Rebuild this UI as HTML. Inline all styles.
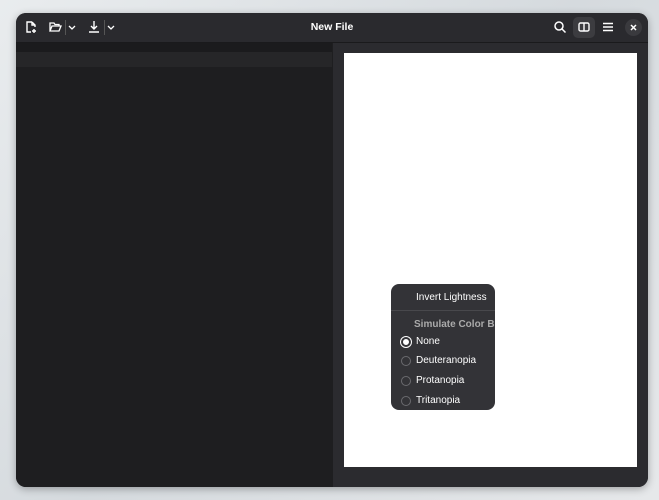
<!DOCTYPE html><html><head><style>
body{margin:0;width:659px;height:500px;background:linear-gradient(135deg,#e9ecee,#d5dade 50%,#e6e8ea);overflow:hidden;font-family:"Liberation Sans",sans-serif;position:relative}
.win{position:absolute;left:16px;top:13px;width:632px;height:474px;background:#1e1e20;border-radius:10px;overflow:hidden;box-shadow:0 2px 8px rgba(0,0,0,.3)}
.hdr{position:absolute;left:0;top:0;width:632px;height:29px;background:#2a2a2e;border-bottom:1px solid #1a1a1c}
.title{position:absolute;left:0;right:0;top:8px;text-align:center;color:#fff;font-weight:bold;font-size:10.5px}
.ic{position:absolute;top:7px}
.left{position:absolute;left:0;top:30px;width:316px;height:444px;background:#1e1e20}
.strip{position:absolute;left:0;top:0;width:316px;height:9px;background:#1b1b1d}
.cur{position:absolute;left:0;top:9px;width:316px;height:15px;background:#262628}
.right{position:absolute;left:317px;top:30px;width:315px;height:444px;background:#2b2b2f}
.page{position:absolute;left:11px;top:10px;width:293px;height:414px;background:#fff}
.menu{position:absolute;left:391px;top:284px;width:104px;height:126px;background:#333337;border-radius:8px;color:#fff;font-size:10px;overflow:hidden}
.menu div{position:absolute;left:25px;white-space:nowrap}
.r{position:absolute;left:10px;width:10px;height:10px;border:1px solid #6a6a6e;border-radius:50%;box-sizing:border-box}
</style></head><body>
<div class="win">
<div class="hdr">
<svg class="ic" style="left:8px" width="14" height="14" viewBox="0 0 14 14" fill="none" stroke="#fff" stroke-width="1.4"><path d="M8 2H3v10h4M8 2l3 3v2M8 2v3h3M10 9v4M8 11h4"/></svg>
<svg class="ic" style="left:32px" width="14" height="14" viewBox="0 0 14 14" fill="none" stroke="#fff" stroke-width="1.3"><path d="M2 11V3h4l1 1.5h4V6M2 11l2-5h9l-2 5z"/></svg>
<div style="position:absolute;left:49px;top:7px;width:1px;height:15px;background:#555"></div>
<svg class="ic" style="left:51px" width="10" height="14" viewBox="0 0 10 14" fill="none" stroke="#fff" stroke-width="1.3"><path d="M2 6l3 3 3-3"/></svg>
<svg class="ic" style="left:71px" width="14" height="14" viewBox="0 0 14 14" fill="none" stroke="#fff" stroke-width="1.4"><path d="M7 1v8M4 6l3 3 3-3M2 12h10"/></svg>
<div style="position:absolute;left:88px;top:7px;width:1px;height:15px;background:#555"></div>
<svg class="ic" style="left:90px" width="10" height="14" viewBox="0 0 10 14" fill="none" stroke="#fff" stroke-width="1.3"><path d="M2 6l3 3 3-3"/></svg>
<div class="title">New File</div>
<svg class="ic" style="left:537px" width="14" height="14" viewBox="0 0 14 14" fill="none" stroke="#fff" stroke-width="1.5"><circle cx="6" cy="6" r="4"/><path d="M9 9l3.5 3.5"/></svg>
<div style="position:absolute;left:557px;top:4px;width:22px;height:21px;background:#3c3c40;border-radius:5px"></div>
<svg class="ic" style="left:561px" width="14" height="14" viewBox="0 0 14 14" fill="none" stroke="#fff" stroke-width="1.4"><rect x="2" y="3" width="10" height="8" rx="1.5"/><path d="M7 3v8" /></svg>
<svg class="ic" style="left:585px" width="14" height="14" viewBox="0 0 14 14" fill="none" stroke="#fff" stroke-width="1.4"><path d="M2 3.5h10M2 7h10M2 10.5h10"/></svg>
<div style="position:absolute;left:609px;top:6px;width:17px;height:17px;background:#3a3a3e;border-radius:50%"></div>
<svg class="ic" style="left:612px;top:9px" width="11" height="11" viewBox="0 0 11 11" stroke="#fff" stroke-width="1.5"><path d="M3 3l5 5M8 3l-5 5"/></svg>
</div>
<div class="left"><div class="strip"></div><div class="cur"></div></div>
<div class="right"><div class="page"></div></div>
</div>
<div class="menu">
<div style="top:8px">Invert Lightness</div>
<div style="left:0;top:26px;width:104px;height:1px;background:#48484c"></div>
<div style="top:35px;color:#aaa;font-weight:bold;left:23px">Simulate Color Blindness</div>
<span class="r" style="top:53px;background:#fff;border:2.5px solid #333337;box-shadow:0 0 0 1px #fff"></span><div style="top:52px">None</div>
<span class="r" style="top:72px"></span><div style="top:71px">Deuteranopia</div>
<span class="r" style="top:92px"></span><div style="top:91px">Protanopia</div>
<span class="r" style="top:112px"></span><div style="top:111px">Tritanopia</div>
</div>
</body></html>
